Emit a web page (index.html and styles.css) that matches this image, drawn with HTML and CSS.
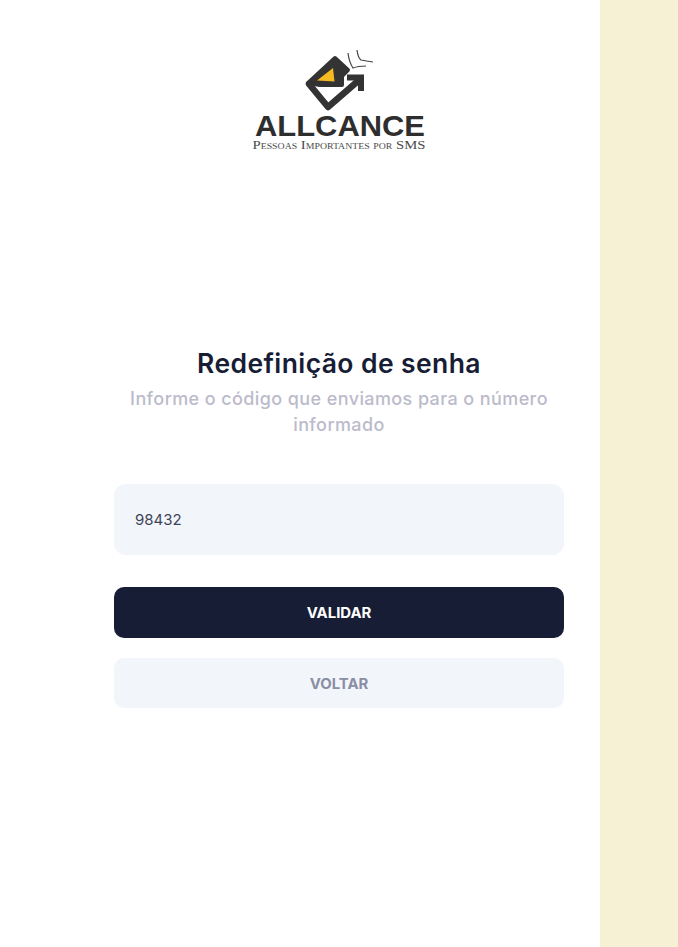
FILE: index.html
```html
<!DOCTYPE html>
<html lang="pt-BR">
<head>
<meta charset="utf-8">
<title>Redefinição de senha</title>
<link rel="stylesheet" href="styles.css">
</head>
<body>
<div class="page">
  <main class="panel">
    <div class="logo">
      <svg class="logo-art" viewBox="251 48 176 106" width="176" height="106" aria-label="Allcance">
        <path class="body" d="M335 58 L348 70 L342 76 L342 85 L320 85 L308 83 Z" />
        <path class="flap" d="M317 80.5 L333 68 L334.5 81.5 Z" />
        <path class="edge" d="M309 84 L328 107 L358 81" />
        <path class="head" d="M347 77.5 L361 77.5 L361 91" />
        <path class="tick" d="M348 53 Q349 62 353 68 Q358 66 366 66 M357 50 Q358 58 361 60 Q366 61 373 62" />
        <text class="wordmark" x="340" y="136" text-anchor="middle" textLength="170" lengthAdjust="spacingAndGlyphs">ALLCANCE</text>
        <text class="tagline" x="339" y="149" text-anchor="middle" textLength="173" lengthAdjust="spacingAndGlyphs">Pessoas Importantes por SMS</text>
      </svg>
    </div>
    <section class="form">
      <h1 class="title">Redefinição de senha</h1>
      <p class="subtitle">Informe o código que enviamos para o número informado</p>
      <div class="field">98432</div>
      <button class="btn btn-primary" type="button">VALIDAR</button>
      <button class="btn btn-secondary" type="button">VOLTAR</button>
    </section>
  </main>
  <aside class="side"></aside>
</div>
</body>
</html>
```
FILE: styles.css
```css
* { box-sizing: border-box; }
html, body { margin: 0; height: 100%; }
body { font-family: Inter, "Noto Sans", sans-serif; background: #fff; }
.page { display: flex; height: 947px; }
.panel { width: 600px; padding-left: 78px; display: flex; flex-direction: column; align-items: center; background: #fff; }
.side { flex: 1; background: #f6f0d5; }
.logo { padding-top: 48px; height: 348px; }
.logo-art { display: block; }
.body { fill: #333; stroke: #333; stroke-width: 4; stroke-linejoin: round; }
.flap { fill: #f5b921; }
.edge { fill: none; stroke: #333; stroke-width: 6.5; stroke-linejoin: round; stroke-linecap: round; }
.head { fill: none; stroke: #333; stroke-width: 6; stroke-linejoin: miter; }
.tick { fill: none; stroke: #444; stroke-width: 1.2; }
.wordmark { font-family: "Liberation Sans", sans-serif; font-weight: 700; font-size: 30px; fill: #2e2e2e; }
.tagline { font-family: "Liberation Serif", serif; font-variant: small-caps; font-size: 13.5px; fill: #4a4a4a; }
.form { width: 450px; display: flex; flex-direction: column; align-items: stretch; }
.title { margin: 0; height: 32px; font-size: 26.5px; line-height: 31px; font-weight: 600; letter-spacing: 0.4px; color: #181d36; text-align: center; }
.subtitle { margin: 6px 0 0; padding: 0 10px; font-size: 18px; line-height: 26px; font-weight: 500; letter-spacing: 0.4px; color: #bbbbcb; text-align: center; }
.field { margin-top: 46px; height: 71px; padding: 0 21px; display: flex; align-items: center; background: #f2f5f9; border-radius: 12px; font-size: 15px; color: #3f4458; }
.btn { display: block; width: 100%; border: 0; font-family: inherit; font-size: 14.9px; font-weight: 700; }
.btn-primary { margin-top: 32px; height: 51px; background: #181d36; color: #fff; border-radius: 10px; }
.btn-secondary { margin-top: 20px; height: 50px; padding-top: 3px; background: #f2f5f9; color: #8a8ea5; border-radius: 10px; }
```
